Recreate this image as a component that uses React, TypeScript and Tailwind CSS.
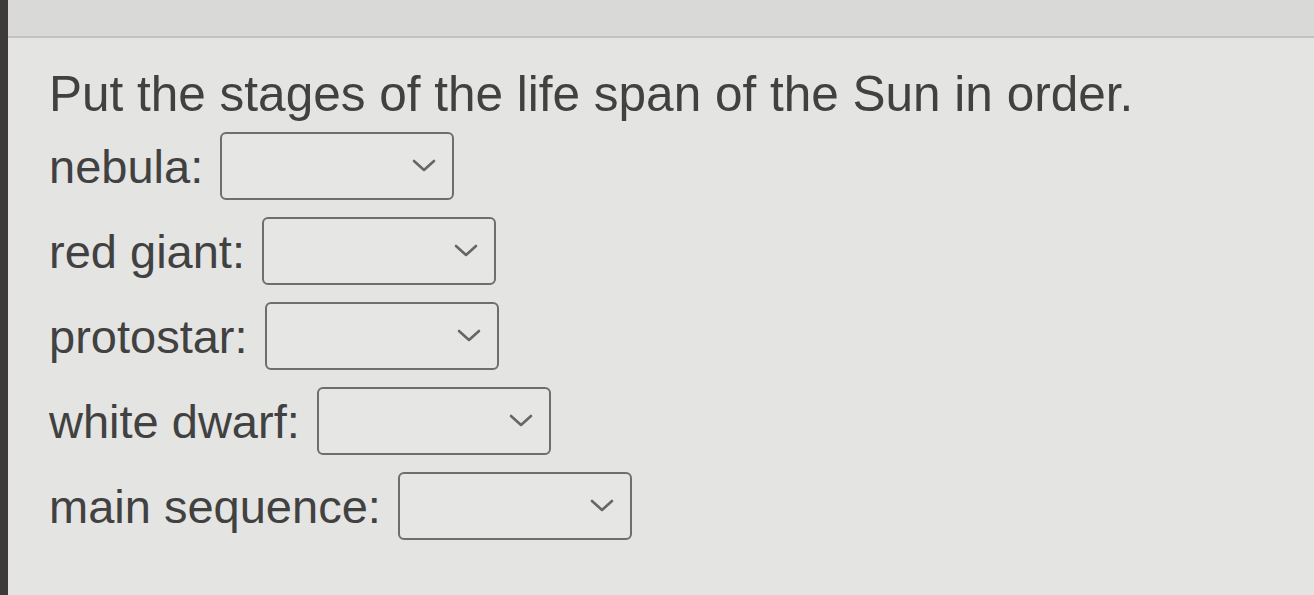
import React from "react";

const rows = ["nebula:", "red giant:", "protostar:", "white dwarf:", "main sequence:"];

function Chevron() {
  return (
    <svg width="24" height="14" viewBox="0 0 24 14" fill="none">
      <path d="M2 2 L12 11 L22 2" stroke="#666666" strokeWidth="2.6" strokeLinecap="round" strokeLinejoin="round" />
    </svg>
  );
}

export default function App() {
  return (
    <div
      className="w-[1314px] h-[595px] flex bg-[#e4e4e2] overflow-hidden"
      style={{ fontFamily: '"Liberation Sans", Arial, sans-serif' }}
    >
      <div className="w-[8px] h-full bg-[#3c3b3a]" />
      <div className="flex-1 flex flex-col">
        <div className="h-[38px] bg-[#d9d9d7] border-b-[2px] border-[#c2c2c0]" />
        <div className="flex flex-col pl-[41px] pt-[28px] text-[#414141]">
          <div className="text-[49.5px] leading-[55px]">
            Put the stages of the life span of the Sun in order.
          </div>
          <div className="flex flex-col gap-[17px] mt-[11px]">
            {rows.map((r) => (
              <div key={r} className="flex items-center gap-[17px] h-[68px]">
                <span className="text-[47px] leading-[55px]">{r}</span>
                <div className="w-[234px] h-[68px] border-[2.5px] border-[#6e6e6e] rounded-[6px] bg-[#e6e6e4] flex items-center justify-end pr-[16px]">
                  <Chevron />
                </div>
              </div>
            ))}
          </div>
        </div>
      </div>
    </div>
  );
}
